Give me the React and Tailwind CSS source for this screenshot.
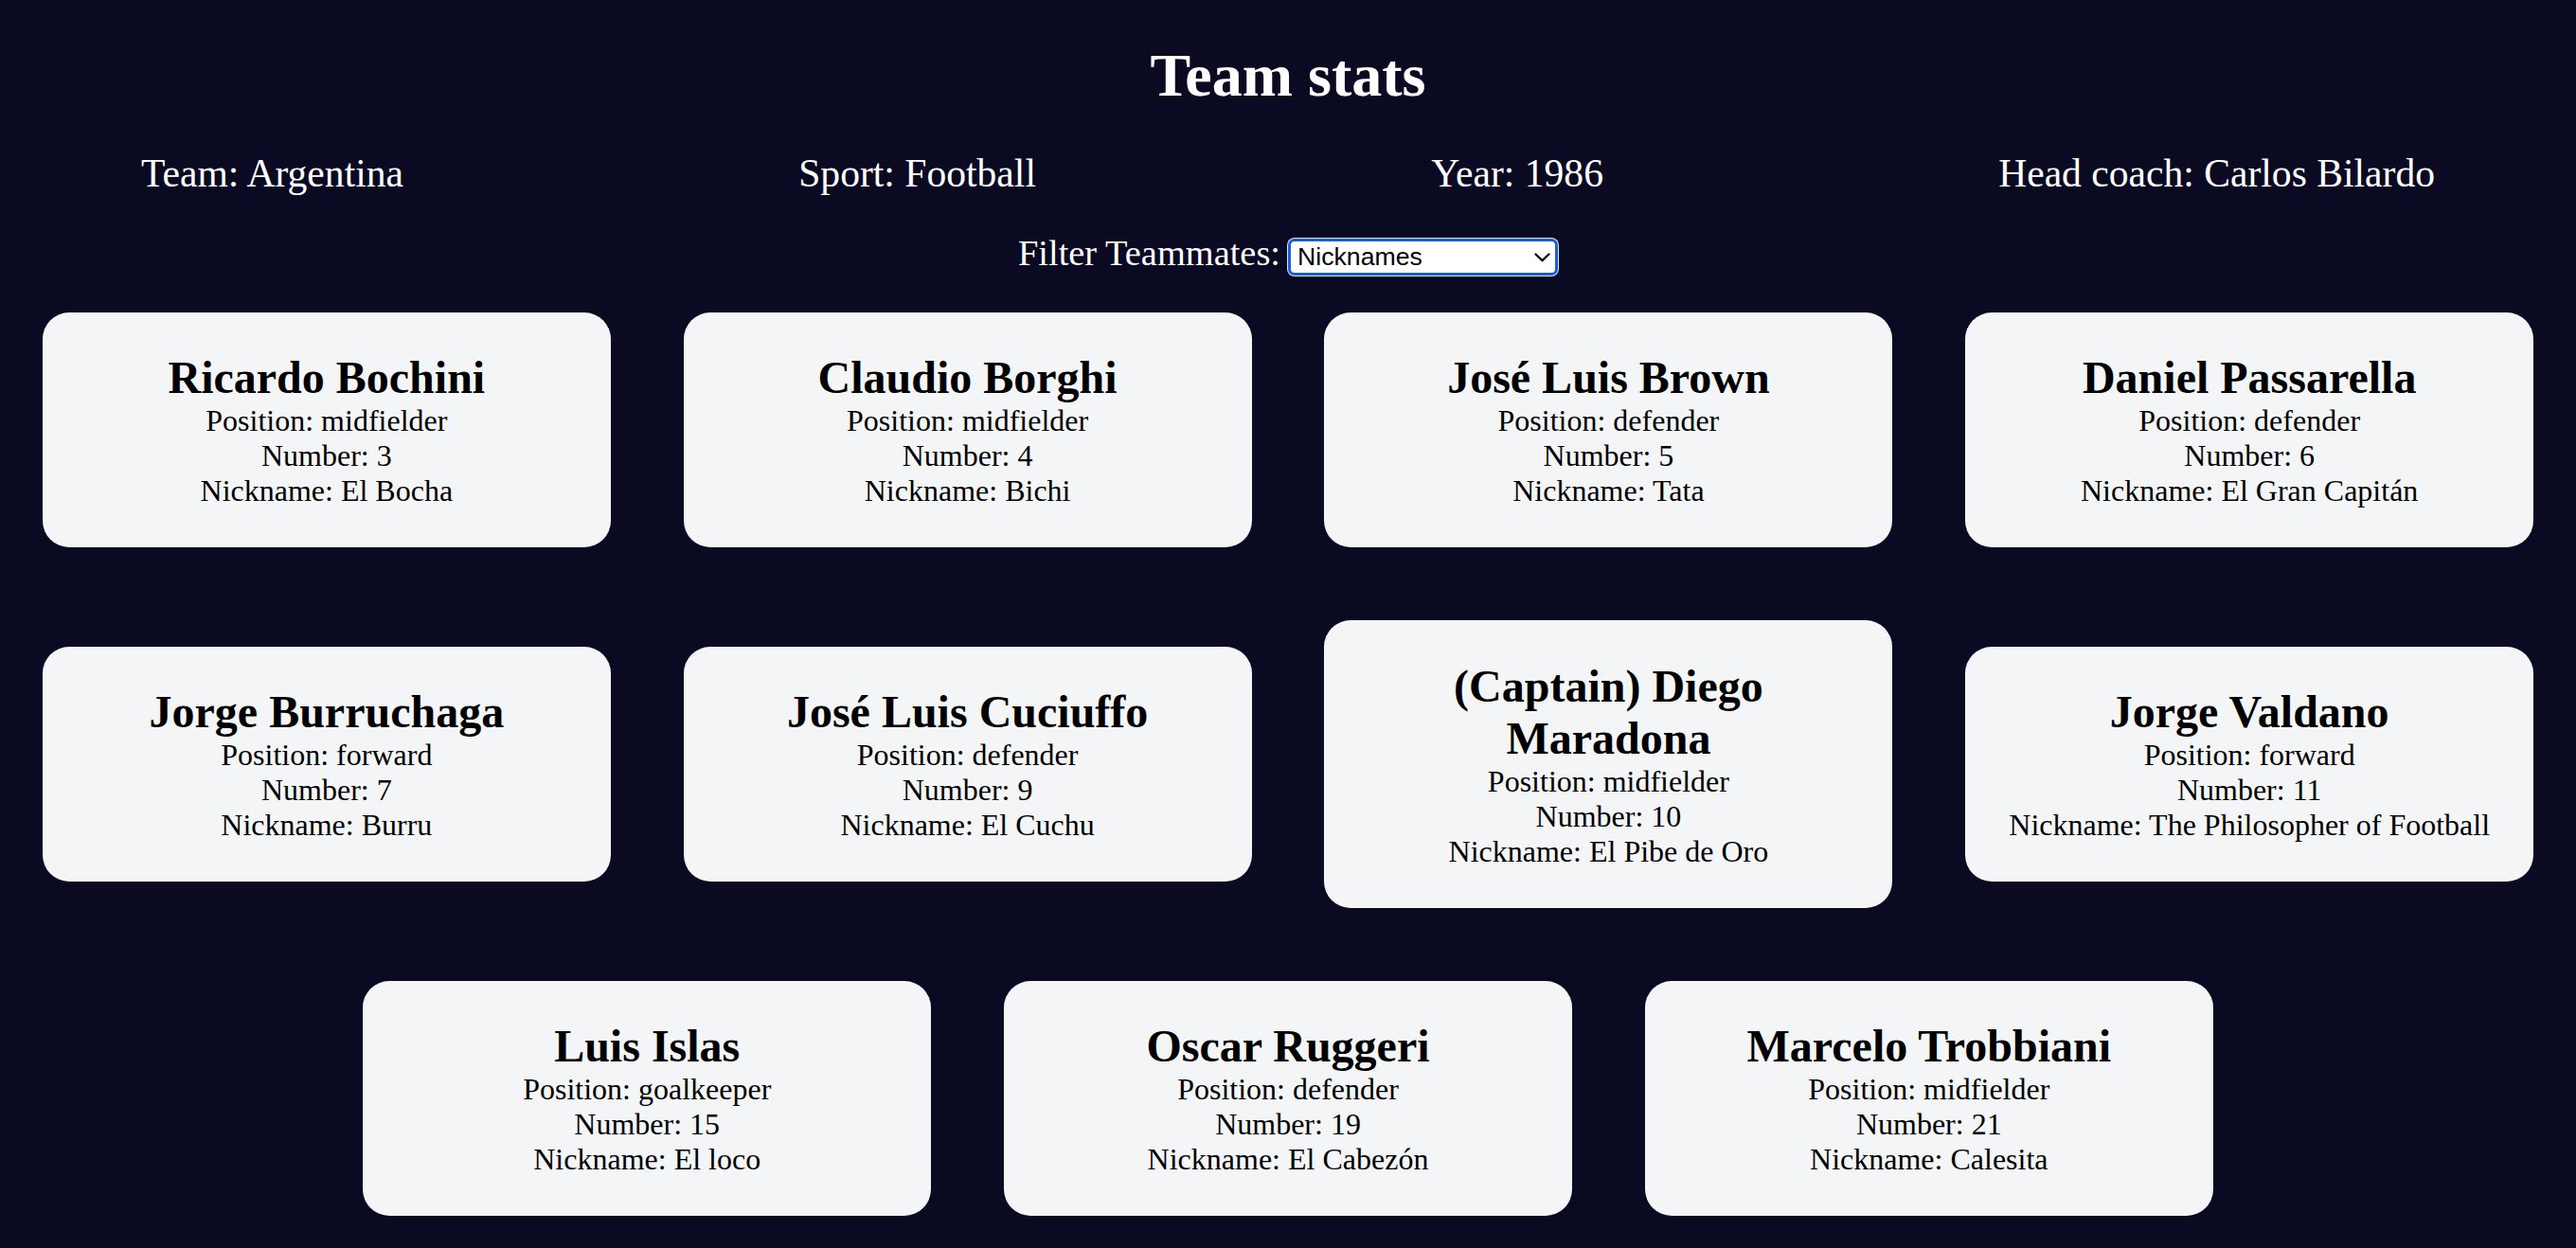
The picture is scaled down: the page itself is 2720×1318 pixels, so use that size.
import React, { useState } from 'react';

const players = [
    { name: 'Ricardo Bochini', position: 'midfielder', number: 3, nickname: 'El Bocha' },
    { name: 'Claudio Borghi', position: 'midfielder', number: 4, nickname: 'Bichi' },
    { name: 'José Luis Brown', position: 'defender', number: 5, nickname: 'Tata' },
    { name: 'Daniel Passarella', position: 'defender', number: 6, nickname: 'El Gran Capitán' },
    { name: 'Jorge Burruchaga', position: 'forward', number: 7, nickname: 'Burru' },
    { name: 'José Luis Cuciuffo', position: 'defender', number: 9, nickname: 'El Cuchu' },
    { name: 'Diego Maradona', position: 'midfielder', number: 10, nickname: 'El Pibe de Oro', isCaptain: true },
    { name: 'Jorge Valdano', position: 'forward', number: 11, nickname: 'The Philosopher of Football' },
    { name: 'Luis Islas', position: 'goalkeeper', number: 15, nickname: 'El loco' },
    { name: 'Oscar Ruggeri', position: 'defender', number: 19, nickname: 'El Cabezón' },
    { name: 'Marcelo Trobbiani', position: 'midfielder', number: 21, nickname: 'Calesita' },
];

const stats = ['Team: Argentina', 'Sport: Football', 'Year: 1986', 'Head coach: Carlos Bilardo'];

export default function App() {
    const [filter, setFilter] = useState('nickname');

    return (
        <div className="min-h-screen bg-[#0a0a23] font-['Liberation_Serif','Times_New_Roman',serif]">
            {/* Header */}
            <div className="text-center text-white">
                <h1 className="pt-[43px] pb-[43px] text-[64px] leading-[73.5px] font-bold">Team stats</h1>
                <div className="flex justify-between px-[149px] text-[41.6px] leading-[47.8px]">
                    {stats.map((s) => (
                        <p key={s}>{s}</p>
                    ))}
                </div>
            </div>

            {/* Filter */}
            <div className="mt-[38px] flex items-start justify-center gap-[8px]">
                <label htmlFor="players" className="text-white text-[38.4px] leading-[44.6px]">Filter Teammates:</label>
                <div className="relative mt-[7px]">
                    <select
                        id="players"
                        value={filter}
                        onChange={(e) => setFilter(e.target.value)}
                        className="block w-[285px] h-[39px] appearance-none bg-white border-[3px] border-[#1762d3] rounded-[7px] shadow-[0_0_0_1px_#dfe7f7] pl-[7px] pr-[30px] py-0 text-[26.67px] leading-[31px] text-black font-['Liberation_Sans',Arial,sans-serif] outline-none"
                    >
                        <option value="all">All Players</option>
                        <option value="nickname">Nicknames</option>
                        <option value="forward">Position Forward</option>
                        <option value="midfielder">Position Midfielder</option>
                        <option value="defender">Position Defender</option>
                        <option value="goalkeeper">Position Goalkeeper</option>
                    </select>
                    <svg className="pointer-events-none absolute right-[8px] top-[15px]" width="17" height="10" viewBox="0 0 17 10" fill="none">
                        <path d="M1.5 1.5 L8.5 8.2 L15.5 1.5" stroke="#111" strokeWidth="2.4" strokeLinecap="round" strokeLinejoin="round" />
                    </svg>
                </div>
            </div>

            {/* Player cards */}
            <div className="flex flex-wrap justify-center items-center">
                {players.map((p) => (
                    <div key={p.name} className="w-[600px] m-[38.4px] bg-[#f4f5f7] rounded-[28px] px-[40px] py-[41.5px] text-center text-black">
                        <h2 className="text-[48px] leading-[55.2px] font-bold">
                            {p.isCaptain ? '(Captain) ' : ''}{p.name}
                        </h2>
                        <p className="text-[32px] leading-[36.8px]">Position: {p.position}</p>
                        <p className="text-[32px] leading-[36.8px]">Number: {p.number}</p>
                        <p className="text-[32px] leading-[36.8px]">Nickname: {p.nickname}</p>
                    </div>
                ))}
            </div>
        </div>
    );
}
